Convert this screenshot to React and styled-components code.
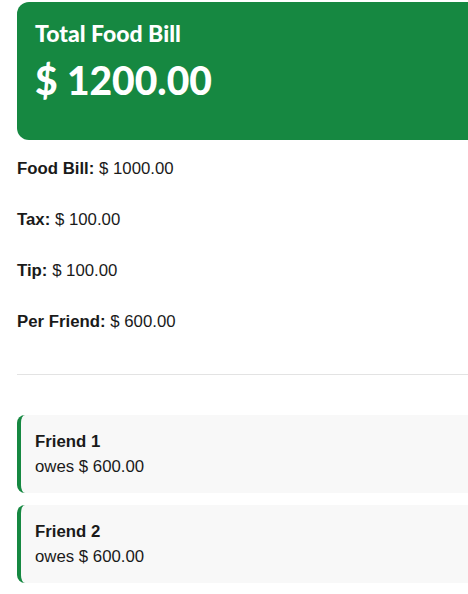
import React from 'react';
import styled, { createGlobalStyle } from 'styled-components';

const GlobalStyle = createGlobalStyle`
  html, body {
    margin: 0;
    padding: 0;
    overflow: hidden;
    background: #ffffff;
  }
  body {
    font-family: "Liberation Sans", Arial, sans-serif;
    color: #1a1a1a;
  }
`;

const Page = styled.div`
  width: 560px;
  padding: 2px 0 0 17px;
  box-sizing: border-box;
`;

const TotalCard = styled.section`
  background: #168841;
  color: #ffffff;
  border-radius: 12px;
  height: 138px;
  box-sizing: border-box;
  padding: 17px 18px;
  font-family: "Lato", "Noto Sans", sans-serif;
`;

const TotalTitle = styled.h2`
  margin: 0;
  font-size: 23px;
  line-height: 28px;
  font-weight: 900;
`;

const TotalAmount = styled.div`
  margin-top: 11px;
  font-size: 39px;
  line-height: 44px;
  font-weight: 900;
`;

const Breakdown = styled.div`
  display: flex;
  flex-direction: column;
  gap: 32px;
  padding-top: 19px;
`;

const Row = styled.div`
  font-size: 16.8px;
  line-height: 19px;
  color: #1a1a1a;

  b {
    font-weight: 700;
  }
`;

const Divider = styled.hr`
  border: none;
  border-top: 1px solid #e3e3e3;
  margin: 43px 0 40px;
`;

const FriendList = styled.div`
  display: flex;
  flex-direction: column;
  gap: 12px;
`;

const FriendCard = styled.div`
  background: #f8f8f8;
  border-left: 4px solid #168841;
  border-radius: 8px;
  padding: 14px 16px 14px 14px;
  font-size: 16.8px;
  line-height: 25px;
`;

const FriendName = styled.div`
  font-weight: 700;
`;

const data = {
  total: 1200,
  bill: 1000,
  tax: 100,
  tip: 100,
  perFriend: 600,
  friends: ['Friend 1', 'Friend 2'],
};

const money = v => `$ ${v.toFixed(2)}`;

export default function App() {
  return (
    <>
      <GlobalStyle />
      <Page>
        <TotalCard>
          <TotalTitle>Total Food Bill</TotalTitle>
          <TotalAmount>{money(data.total)}</TotalAmount>
        </TotalCard>

        <Breakdown>
          <Row><b>Food Bill:</b> {money(data.bill)}</Row>
          <Row><b>Tax:</b> {money(data.tax)}</Row>
          <Row><b>Tip:</b> {money(data.tip)}</Row>
          <Row><b>Per Friend:</b> {money(data.perFriend)}</Row>
        </Breakdown>

        <Divider />

        <FriendList>
          {data.friends.map(name => (
            <FriendCard key={name}>
              <FriendName>{name}</FriendName>
              <div>owes {money(data.perFriend)}</div>
            </FriendCard>
          ))}
        </FriendList>
      </Page>
    </>
  );
}
